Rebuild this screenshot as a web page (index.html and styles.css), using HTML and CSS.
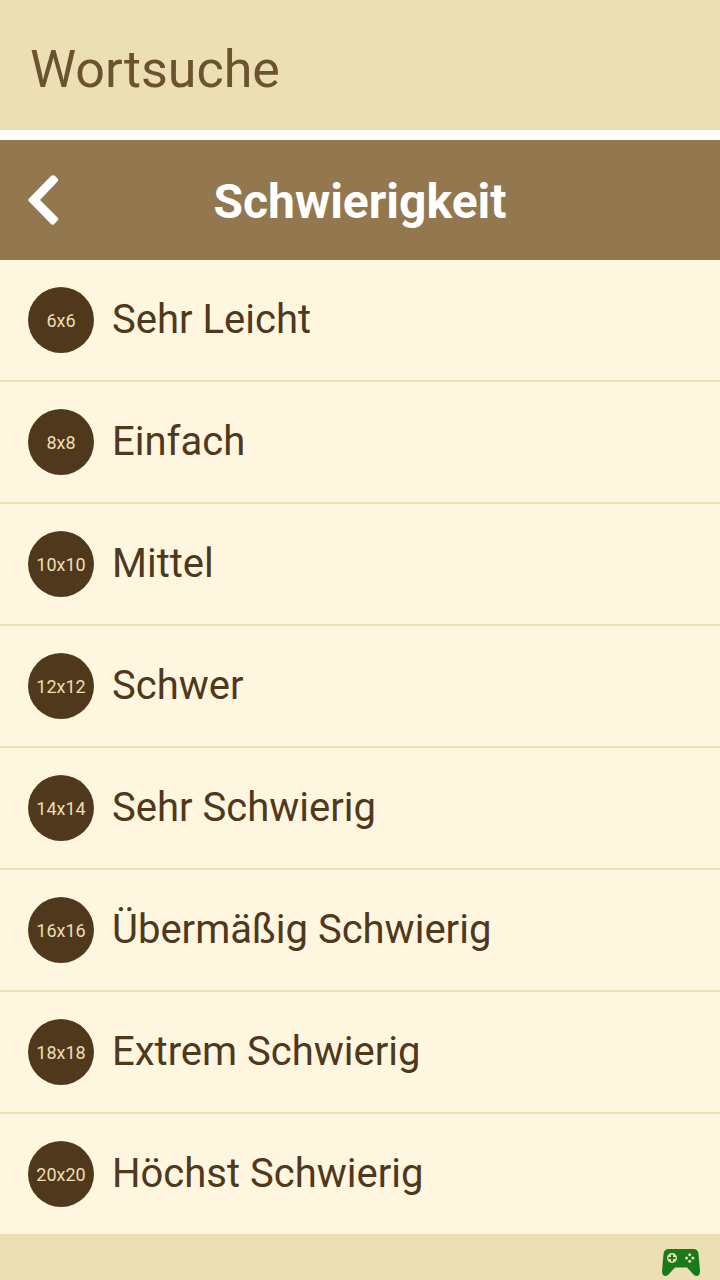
FILE: index.html
```html
<!DOCTYPE html>
<html lang="de">
<head>
<meta charset="utf-8">
<meta name="viewport" content="width=device-width, initial-scale=1">
<title>Wortsuche</title>
<link rel="stylesheet" href="styles.css">
</head>
<body>
<header class="app-bar"><h1 class="app-title">Wortsuche</h1></header>
<main class="screen">
<div class="section-bar">
<button class="back" type="button" aria-label="Zurück"><svg class="back-icon" viewBox="0 0 32 50" aria-hidden="true"><path d="M1 23.500 23 1Q25 -0.500 27 1L29.500 3.500Q31 5 29.500 6.500L12 25 29.500 42.500Q31 44 29.500 45.500L26 49.300Q24.500 50.500 23 49L1 26.500Q-0.500 25 1 23.500Z" fill="#fff"/></svg></button>
<h2 class="section-title">Schwierigkeit</h2>
</div>
<ul class="levels">
<li class="row"><button class="level" type="button"><span class="badge">6x6</span><span class="name">Sehr Leicht</span></button></li>
<li class="row"><button class="level" type="button"><span class="badge">8x8</span><span class="name">Einfach</span></button></li>
<li class="row"><button class="level" type="button"><span class="badge">10x10</span><span class="name">Mittel</span></button></li>
<li class="row"><button class="level" type="button"><span class="badge">12x12</span><span class="name">Schwer</span></button></li>
<li class="row"><button class="level" type="button"><span class="badge">14x14</span><span class="name">Sehr Schwierig</span></button></li>
<li class="row"><button class="level" type="button"><span class="badge">16x16</span><span class="name">Übermäßig Schwierig</span></button></li>
<li class="row"><button class="level" type="button"><span class="badge">18x18</span><span class="name">Extrem Schwierig</span></button></li>
<li class="row"><button class="level" type="button"><span class="badge">20x20</span><span class="name">Höchst Schwierig</span></button></li>
</ul>
</main>
<footer class="footer">
<button class="games" type="button" aria-label="Spiele"><svg class="games-icon" viewBox="0 0 38 27" aria-hidden="true"><path d="M7 0H31Q36 0 36.500 5L38 22Q38 27 34.500 27Q32.500 27 31 25L25 18.500H13L7 25Q5.500 27 3.500 27Q0 27 0 22L1.500 5Q2 0 7 0Z" fill="#187a18"/><circle cx="10" cy="9" r="5" fill="#ede0b3"/><path d="M10 5.500V12.500M6.500 9H13.500" stroke="#187a18" stroke-width="2"/><g fill="#ede0b3"><circle cx="27.700" cy="5.800" r="1.500"/><circle cx="27.700" cy="12.200" r="1.500"/><circle cx="24.500" cy="9" r="1.500"/><circle cx="30.900" cy="9" r="1.500"/></g></svg></button>
</footer>
</body>
</html>
```
FILE: styles.css
```css
* { box-sizing: border-box; }
body { margin: 0; min-height: 100vh; display: flex; flex-direction: column; background: #eddfb4; color: #4f381b; font-family: Roboto, sans-serif; }
button { border: 0; background: none; color: inherit; font: inherit; cursor: pointer; }
h1, h2, ul { margin: 0; padding: 0; }
.app-bar { padding: 35px 30px 25px; border-bottom: 10px solid #fff; }
.app-title { font-size: 52px; line-height: 70px; font-weight: 400; color: #6b5331; }
.section-bar { display: grid; grid-template-columns: 88px 1fr 88px; align-items: center; min-height: 120px; background: #93784f; color: #fff; }
.back { display: flex; padding: 0 28px; }
.back-icon { width: 32px; height: 50px; }
.section-title { padding-top: 4px; font-size: 48px; line-height: 56px; font-weight: 700; text-align: center; }
.levels { list-style: none; background: #fff6e0; }
.row + .row { border-top: 2px solid #eddfb4; }
.level { display: flex; align-items: center; gap: 18px; width: 100%; min-height: 120px; padding: 0 28px; text-align: left; }
.badge { flex: none; width: 66px; height: 66px; border-radius: 50%; background: #4f381b; color: #eddfb4; font-size: 18px; line-height: 68px; text-align: center; }
.name { font-size: 40px; line-height: 48px; }
.footer { display: flex; flex: 1; justify-content: flex-end; align-items: flex-end; padding: 0 20px 4px; }
.games { display: flex; padding: 0; }
.games-icon { width: 38px; height: 27px; }
```
